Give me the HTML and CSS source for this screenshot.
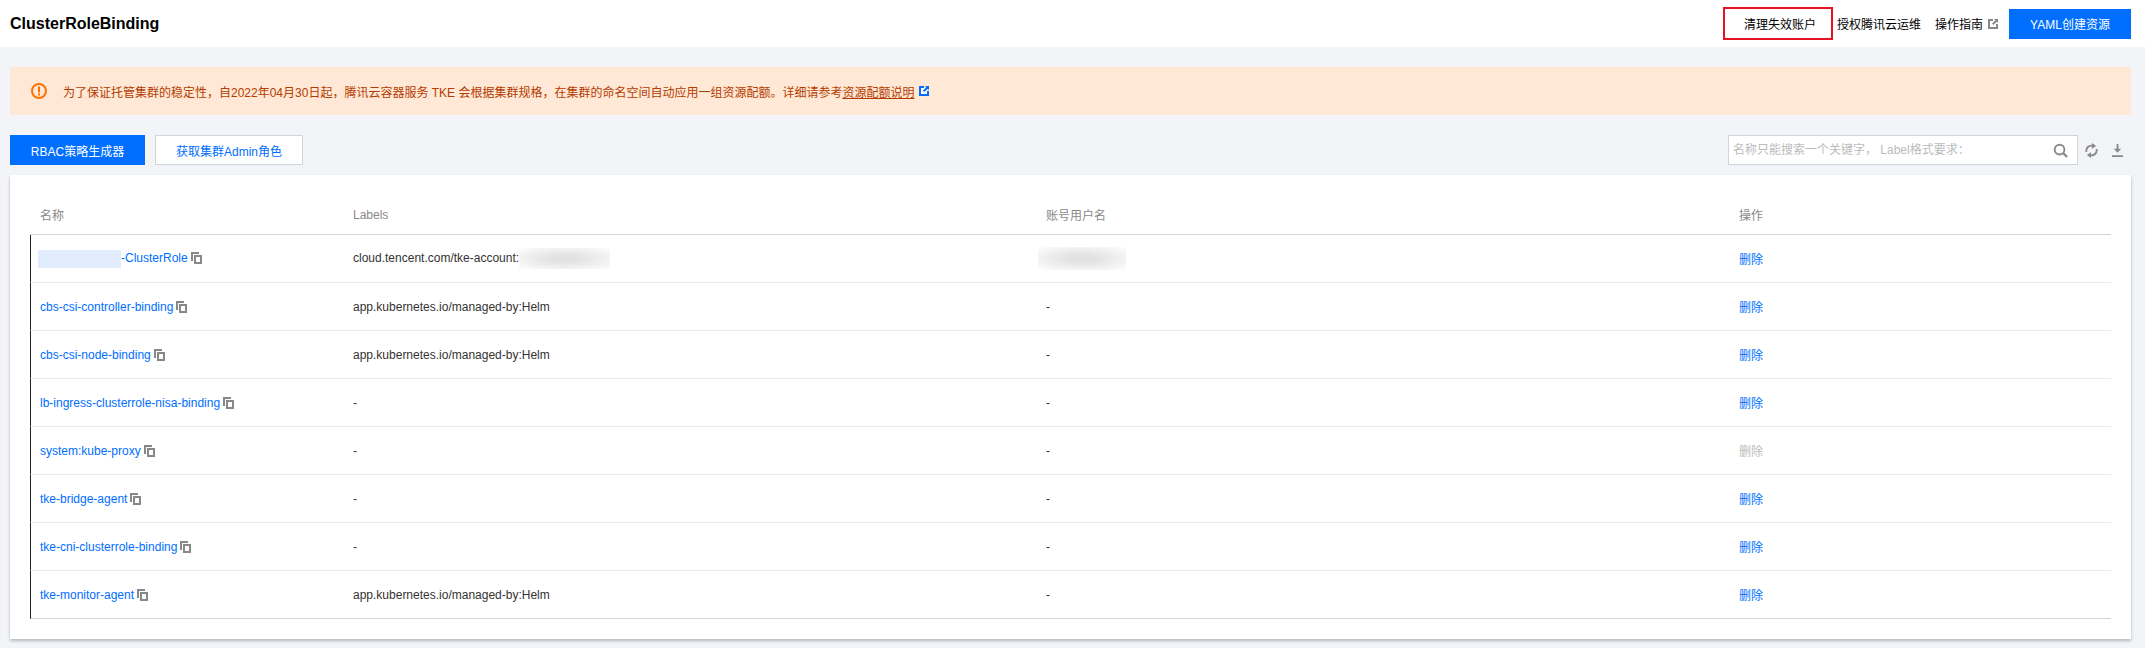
FILE: index.html
```html
<!DOCTYPE html>
<html lang="en">

<head>
    <meta charset="UTF-8">
    <title>ClusterRoleBinding</title>
    <link rel="stylesheet" href="styles.css">
</head>

<body>
    <svg class="defs" width="0" height="0">
        <symbol id="copy" viewBox="0 0 11 12">
            <path d="M0 0H8V2H2V9H0Z" fill="#888"/>
            <path d="M3 3H11V12H3ZM5 5V10H9V5Z" fill="#888" fill-rule="evenodd"/>
        </symbol>
    </svg>

    <header class="topbar">
        <h1>ClusterRoleBinding</h1>
        <div class="top-actions">
            <a class="cleanup">清理失效账户</a>
            <a class="top-link">授权腾讯云运维</a>
            <a class="top-link guide">操作指南
                <svg class="ext-icon" viewBox="0 0 10 10" width="10" height="10">
                    <path d="M0 0H5V2H2V8H8V5H10V10H0Z" fill="#888"/>
                    <path d="M6 0H10V4L8.7 2.7L5.4 6L4 4.6L7.3 1.3Z" fill="#888"/>
                </svg>
            </a>
            <button class="btn primary yaml">YAML创建资源</button>
        </div>
    </header>

    <main class="content">
        <div class="notice">
            <svg class="notice-icon" viewBox="0 0 16 16" width="16" height="16">
                <circle cx="8" cy="8" r="7" fill="none" stroke="#ff7200" stroke-width="2"/>
                <path d="M7 3.5H9V9.5H7ZM7 10.5H9V12.5H7Z" fill="#ff7200"/>
            </svg>
            <span>为了保证托管集群的稳定性，自2022年04月30日起，腾讯云容器服务 TKE 会根据集群规格，在集群的命名空间自动应用一组资源配额。详细请参考<a class="notice-link">资源配额说明</a></span>
            <svg class="notice-ext" viewBox="0 0 10 10" width="10" height="10">
                <rect x="2" y="2" width="6" height="6" fill="#fff"/>
                <path d="M0 0H5V2H2V8H8V5H10V10H0Z" fill="#006eff"/>
                <path d="M6 0H10V4L8.7 2.7L5.4 6L4 4.6L7.3 1.3Z" fill="#006eff"/>
            </svg>
        </div>

        <div class="toolbar">
            <div class="toolbar-left">
                <button class="btn primary rbac">RBAC策略生成器</button>
                <button class="btn outline">获取集群Admin角色</button>
            </div>
            <div class="toolbar-right">
                <div class="search">
                    <input type="text" placeholder="名称只能搜索一个关键字， Label格式要求：">
                    <svg viewBox="0 0 16 16" width="15" height="15">
                        <circle cx="7" cy="7" r="5.2" fill="none" stroke="#888" stroke-width="2"/>
                        <path d="M11 11L15 15" stroke="#888" stroke-width="2.4"/>
                    </svg>
                </div>
                <svg class="tool-icon refresh" viewBox="0 0 14 16" width="13" height="15">
                    <path d="M1.5 9.5A5.6 5.6 0 0 1 8.5 3" fill="none" stroke="#888" stroke-width="2"/>
                    <path d="M7.5 0L12 3.2L7.5 6Z" fill="#888"/>
                    <path d="M12.5 6.5A5.6 5.6 0 0 1 5.5 13" fill="none" stroke="#888" stroke-width="2"/>
                    <path d="M6.5 16L2 12.8L6.5 10Z" fill="#888"/>
                </svg>
                <svg class="tool-icon download" viewBox="0 0 12 14" width="11" height="13">
                    <path d="M5 0H7V5H10L6 9.5L2 5H5ZM0 12.3H12V14H0Z" fill="#888"/>
                </svg>
            </div>
        </div>

        <section class="card">
            <table class="list">
                <colgroup>
                    <col class="col-name">
                    <col class="col-wide">
                    <col class="col-wide">
                    <col>
                </colgroup>
                <thead>
                    <tr>
                        <th>名称</th>
                        <th>Labels</th>
                        <th>账号用户名</th>
                        <th>操作</th>
                    </tr>
                </thead>
                <tbody>
                    <tr>
                        <td><a class="name"><span class="blur-name"></span>-ClusterRole</a><svg class="copy"><use href="#copy"/></svg></td>
                        <td>cloud.tencent.com/tke-account:<span class="blur-gray blur-label"></span></td>
                        <td><span class="blur-gray blur-user"></span></td>
                        <td><a class="del">删除</a></td>
                    </tr>
                    <tr>
                        <td><a class="name">cbs-csi-controller-binding</a><svg class="copy"><use href="#copy"/></svg></td>
                        <td>app.kubernetes.io/managed-by:Helm</td>
                        <td>-</td>
                        <td><a class="del">删除</a></td>
                    </tr>
                    <tr>
                        <td><a class="name">cbs-csi-node-binding</a><svg class="copy"><use href="#copy"/></svg></td>
                        <td>app.kubernetes.io/managed-by:Helm</td>
                        <td>-</td>
                        <td><a class="del">删除</a></td>
                    </tr>
                    <tr>
                        <td><a class="name">lb-ingress-clusterrole-nisa-binding</a><svg class="copy"><use href="#copy"/></svg></td>
                        <td>-</td>
                        <td>-</td>
                        <td><a class="del">删除</a></td>
                    </tr>
                    <tr>
                        <td><a class="name">system:kube-proxy</a><svg class="copy"><use href="#copy"/></svg></td>
                        <td>-</td>
                        <td>-</td>
                        <td><a class="del disabled">删除</a></td>
                    </tr>
                    <tr>
                        <td><a class="name">tke-bridge-agent</a><svg class="copy"><use href="#copy"/></svg></td>
                        <td>-</td>
                        <td>-</td>
                        <td><a class="del">删除</a></td>
                    </tr>
                    <tr>
                        <td><a class="name">tke-cni-clusterrole-binding</a><svg class="copy"><use href="#copy"/></svg></td>
                        <td>-</td>
                        <td>-</td>
                        <td><a class="del">删除</a></td>
                    </tr>
                    <tr>
                        <td><a class="name">tke-monitor-agent</a><svg class="copy"><use href="#copy"/></svg></td>
                        <td>app.kubernetes.io/managed-by:Helm</td>
                        <td>-</td>
                        <td><a class="del">删除</a></td>
                    </tr>
                </tbody>
            </table>
        </section>
    </main>
</body>

</html>
```
FILE: styles.css
```css
* {
    box-sizing: border-box;
}

body {
    margin: 0;
    background-color: #f2f4f8;
    color: #333;
    font-family: "Liberation Sans", "Noto Sans CJK SC", sans-serif;
    font-size: 12px;
}

.defs {
    display: block;
    height: 0;
}

/* Top bar */
.topbar {
    height: 47px;
    padding: 0 14px 0 10px;
    background-color: #fff;
    display: flex;
    justify-content: space-between;
    align-items: center;
}

.topbar h1 {
    margin: 0;
    font-size: 16px;
    font-weight: bold;
    color: #000;
}

.top-actions {
    display: flex;
    align-items: center;
}

.cleanup {
    width: 110px;
    height: 33px;
    margin-right: 4px;
    border: 2px solid #e81123;
    display: flex;
    align-items: center;
    justify-content: center;
    padding-left: 4px;
    color: #000;
}

.top-link {
    margin-right: 14px;
    color: #000;
}

.guide {
    display: flex;
    align-items: center;
    gap: 5px;
    margin-right: 11px;
}

.btn {
    height: 30px;
    border: 0;
    padding: 0;
    font-family: inherit;
    font-size: 12px;
}

.primary {
    background-color: #006eff;
    color: #fff;
}

.yaml {
    width: 122px;
}

.rbac {
    width: 135px;
}

.outline {
    width: 148px;
    margin-left: 10px;
    background-color: #fff;
    border: 1px solid #cfd5de;
    color: #006eff;
}

/* Page content */
.content {
    padding: 20px 14px 9px 10px;
}

.notice {
    height: 48px;
    padding-left: 21px;
    background-color: #ffe8d5;
    color: #b43c00;
    display: flex;
    align-items: center;
}

.notice-icon {
    margin-right: 16px;
}

.notice-link {
    color: #b43c00;
    text-decoration: underline;
}

.notice-ext {
    margin-left: 5px;
}

.toolbar {
    margin: 20px 0 10px;
    display: flex;
    justify-content: space-between;
}

.toolbar-left,
.toolbar-right {
    display: flex;
    align-items: center;
}

.search {
    width: 350px;
    height: 30px;
    padding-right: 9px;
    background-color: #fff;
    border: 1px solid #cfd5de;
    display: flex;
    align-items: center;
}

.search input {
    flex: 1;
    min-width: 0;
    border: 0;
    outline: 0;
    padding: 0 4px;
    font-family: inherit;
    font-size: 12px;
}

.search input::placeholder {
    color: #bbb;
    opacity: 1;
}

.tool-icon.refresh {
    margin-left: 7px;
}

.tool-icon.download {
    margin: 0 8px 0 14px;
}

/* Table card */
.card {
    height: 464px;
    padding: 20px 20px 0;
    background-color: #fff;
    box-shadow: 0 2px 3px rgba(54, 58, 80, 0.32);
}

.list {
    width: 100%;
    border-collapse: separate;
    border-spacing: 0;
    table-layout: fixed;
}

.col-name {
    width: 313px;
}

.col-wide {
    width: 693px;
}

.list th {
    height: 40px;
    padding: 0 10px;
    border-bottom: 1px solid #cfd5de;
    font-weight: normal;
    color: #888;
    text-align: left;
}

.list td {
    height: 48px;
    padding: 0 10px;
    border-bottom: 1px solid #e7eaef;
    color: #333;
    white-space: nowrap;
}

.list td:first-child {
    border-left: 1px solid #222;
    padding-left: 9px;
}

.list tbody tr:last-child td {
    border-bottom-color: #cfd5de;
}

.name {
    color: #006eff;
}

.copy {
    width: 11px;
    height: 12px;
    margin-left: 3px;
    vertical-align: -2px;
}

.del {
    color: #006eff;
}

.del.disabled {
    color: #bbb;
}

/* Blurred out account values */
.blur-name {
    display: inline-block;
    width: 83px;
    height: 18px;
    margin-left: -2px;
    background-color: #e1edfd;
    vertical-align: middle;
}

.blur-gray {
    display: inline-block;
    background: radial-gradient(ellipse at center, #e2e2e2 20%, #fcfcfc 95%);
    vertical-align: middle;
}

.blur-label {
    width: 91px;
    height: 21px;
}

.blur-user {
    width: 88px;
    height: 23px;
    margin-left: -8px;
}
```
